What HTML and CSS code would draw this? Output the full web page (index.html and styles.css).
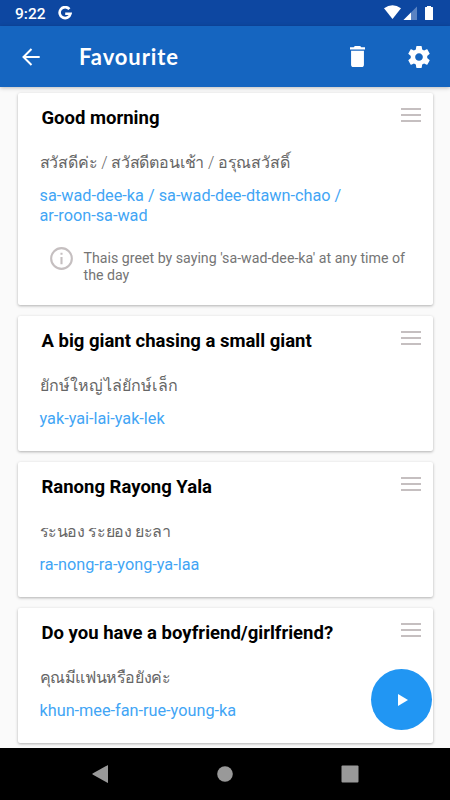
FILE: index.html
```
<!DOCTYPE html>
<html lang="en">
<head>
    <meta charset="UTF-8">
    <meta name="viewport" content="width=device-width, initial-scale=1.0">
    <title>Favourite</title>
    <link rel="stylesheet" href="styles.css">
</head>
<body>
    <div class="status-bar">
        <span class="time">9:22</span>
        <svg class="google" viewBox="0 0 14 14"><path d="M11.4 3.1A5.5 5.5 0 1 0 12.5 7.800H7.2" fill="none" stroke="#fff" stroke-width="2.6"/></svg>
        <svg class="signals" viewBox="0 0 51 16">
            <path d="M0 3.2Q8.500-2.700 17 3.200L8.500 14z" fill="#fff"/>
            <path d="M33 1.500V15H19.500z" fill="#5b83c2"/>
            <path d="M27 7.500V15H19.500z" fill="#fff"/>
            <path d="M43 1h4v1h1.500q.5 0 .5.600V14.400q0 .600-.6.600h-6.800q-.6 0-.6-.6V2.600q0-.6.5-.6H43z" fill="#fff"/>
        </svg>
    </div>

    <header class="app-bar">
        <svg class="back" viewBox="0 0 18 18"><path d="M17.700 9H1.500M9.500 1L1.500 9L9.500 17" fill="none" stroke="#fff" stroke-width="2"/></svg>
        <h1>Favourite</h1>
        <svg class="trash" viewBox="5 3 14 18" preserveAspectRatio="none"><path d="M6 19c0 1.100.9 2 2 2h8c1.100 0 2-.9 2-2V7H6v12zM19 4h-3.500l-1-1h-5l-1 1H5v2h14V4z" fill="#fff"/></svg>
        <svg class="gear" viewBox="2 2 20 20"><path d="M19.430 12.980c.04-.32.070-.64.070-.98s-.03-.66-.07-.98l2.110-1.650c.19-.15.240-.42.120-.64l-2-3.460c-.12-.22-.39-.3-.61-.22l-2.490 1c-.52-.4-1.080-.73-1.690-.98l-.38-2.650C14.460 2.180 14.250 2 14 2h-4c-.25 0-.46.180-.49.420l-.38 2.650c-.61.250-1.170.590-1.690.980l-2.490-1c-.23-.09-.49 0-.61.220l-2 3.460c-.13.220-.07.490.12.640l2.110 1.650c-.04.320-.07.650-.07.980s.03.660.07.980l-2.110 1.650c-.19.150-.24.420-.12.640l2 3.460c.12.220.39.300.61.220l2.490-1c.52.400 1.080.730 1.690.980l.38 2.650c.03.240.24.420.49.420h4c.25 0 .46-.18.490-.42l.38-2.650c.61-.25 1.170-.59 1.690-.98l2.490 1c.23.090.49 0 .61-.22l2-3.460c.12-.22.070-.49-.12-.64l-2.110-1.650zM12 15.500c-1.930 0-3.500-1.570-3.500-3.500s1.570-3.500 3.500-3.500 3.500 1.570 3.500 3.500-1.570 3.500-3.500 3.500z" fill="#fff"/></svg>
    </header>

    <main class="phrases">
        <section class="card card-note">
            <div class="card-head">
                <h2>Good morning</h2>
                <div class="handle"></div>
            </div>
            <p class="thai thai-morning">สวัสดีค่ะ / สวัสดีตอนเช้า / อรุณสวัสดิ์</p>
            <p class="reading">sa-wad-dee-ka / sa-wad-dee-dtawn-chao /<br>ar-roon-sa-wad</p>
            <div class="note">
                <svg viewBox="0 0 22 22"><circle cx="11" cy="11" r="9.900" fill="none" stroke="#c5bfc0" stroke-width="2"/><path d="M10 5.500h2v2h-2zM10 9.500h2v7h-2z" fill="#c5bfc0"/></svg>
                <p>Thais greet by saying 'sa-wad-dee-ka' at any time of<br>the day</p>
            </div>
        </section>

        <section class="card">
            <div class="card-head">
                <h2>A big giant chasing a small giant</h2>
                <div class="handle"></div>
            </div>
            <p class="thai thai-giant">ยักษ์ใหญ่ไล่ยักษ์เล็ก</p>
            <p class="reading">yak-yai-lai-yak-lek</p>
        </section>

        <section class="card">
            <div class="card-head">
                <h2>Ranong Rayong Yala</h2>
                <div class="handle"></div>
            </div>
            <p class="thai thai-ranong">ระนอง ระยอง ยะลา</p>
            <p class="reading">ra-nong-ra-yong-ya-laa</p>
        </section>

        <section class="card">
            <div class="card-head">
                <h2>Do you have a boyfriend/girlfriend?</h2>
                <div class="handle"></div>
            </div>
            <p class="thai thai-friend">คุณมีแฟนหรือยังค่ะ</p>
            <p class="reading">khun-mee-fan-rue-young-ka</p>
        </section>
    </main>

    <button class="play" aria-label="Play">
        <svg viewBox="0 0 10 12"><path d="M0 0L10 6L0 12z" fill="#fff"/></svg>
    </button>

    <nav class="nav-bar">
        <svg viewBox="0 0 18 18"><path d="M16 .5V17.500q0 .6-.6.300L.6 9.400q-.5-.4 0-.8L15.400.2q.6-.3.600.3z" fill="#999"/></svg>
        <svg viewBox="0 0 18 18"><circle cx="9" cy="9" r="7.800" fill="#999"/></svg>
        <svg viewBox="0 0 18 18"><rect x=".5" y=".5" width="17" height="17" rx="1" fill="#999"/></svg>
    </nav>
</body>
</html>
```

FILE: styles.css
```
* {
    box-sizing: border-box;
}

body {
    font-family: Roboto, "Noto Sans", sans-serif;
    display: flex;
    flex-direction: column;
    height: 800px;
    margin: 0;
    background: #fafafa;
    overflow: hidden;
}

h1, h2, p {
    margin: 0;
}

svg {
    display: block;
    flex: none;
}

.status-bar {
    display: flex;
    align-items: center;
    height: 26px;
    flex: none;
    padding: 0 15px 0 15px;
    background: #0d47a1;
    color: #fff;
}

.time {
    width: 43px;
    font-size: 15.500px;
    font-weight: 500;
    line-height: 26px;
    padding-top: 2px;
}

.google {
    width: 14px;
    height: 14px;
}

.signals {
    width: 51px;
    height: 16px;
    margin-left: auto;
}

.app-bar {
    display: flex;
    align-items: center;
    height: 61px;
    flex: none;
    padding: 0 20px 0 22px;
    background: #1565c0;
    box-shadow: 0 1px 4px rgba(0, 0, 0, 0.25);
    color: #fff;
}

.back {
    width: 18px;
    height: 18px;
}

.app-bar h1 {
    margin-left: 39px;
    font-family: Lato, sans-serif;
    font-size: 22px;
    font-weight: 700;
    letter-spacing: 0.9px;
}

.trash {
    width: 15px;
    height: 21px;
    margin-left: auto;
    margin-right: 43px;
}

.gear {
    width: 22px;
    height: 22px;
}

.phrases {
    display: flex;
    flex-direction: column;
    gap: 11px;
    flex: 1;
    min-height: 0;
    padding: 6px 17.500px 0 17.500px;
    overflow: hidden;
}

.card {
    height: 135px;
    flex: none;
    padding: 0 12px 0 22px;
    background: #fff;
    border-radius: 2px;
    box-shadow: 0 1px 3px rgba(0, 0, 0, 0.3);
}

.card-note {
    height: 212px;
}

.card-head {
    display: flex;
    justify-content: space-between;
    align-items: flex-start;
    height: 54px;
    padding: 13px 0 0 2px;
}

.card h2 {
    font-size: 18.500px;
    font-weight: 700;
    line-height: 24px;
    color: #000;
}

.handle {
    width: 20px;
    height: 14px;
    margin-top: 2px;
    border-top: 2px solid #c5bfc0;
    border-bottom: 2px solid #c5bfc0;
    background: linear-gradient(#c5bfc0, #c5bfc0) 0 4px / 100% 2px no-repeat;
}

.thai {
    height: 32px;
    font-size: 16px;
    font-weight: 300;
    line-height: 32px;
    color: #666;
    white-space: nowrap;
}

.thai-morning {
    letter-spacing: -0.180px;
}

.thai-giant {
    letter-spacing: 0.180px;
}

.thai-ranong {
    letter-spacing: -0.350px;
}

.thai-friend {
    letter-spacing: -0.380px;
}

.reading {
    padding-top: 7px;
    font-size: 16.250px;
    line-height: 20px;
    color: #42a5f5;
    white-space: nowrap;
}

.note {
    display: flex;
    gap: 11px;
    padding: 21px 0 0 10px;
}

.note svg {
    width: 23px;
    height: 23px;
}

.note p {
    padding-top: 3px;
    font-size: 14.200px;
    line-height: 16.500px;
    color: #757575;
    white-space: nowrap;
}

.play {
    position: absolute;
    left: 371px;
    top: 669px;
    display: flex;
    align-items: center;
    justify-content: center;
    width: 61px;
    height: 61px;
    padding: 0 0 0 2px;
    border: 0;
    border-radius: 50%;
    background: #2196f3;
}

.play svg {
    width: 10px;
    height: 12px;
}

.nav-bar {
    display: flex;
    justify-content: center;
    align-items: center;
    gap: 106.500px;
    height: 52px;
    flex: none;
    background: #000;
}

.nav-bar svg {
    width: 18px;
    height: 18px;
}
```
